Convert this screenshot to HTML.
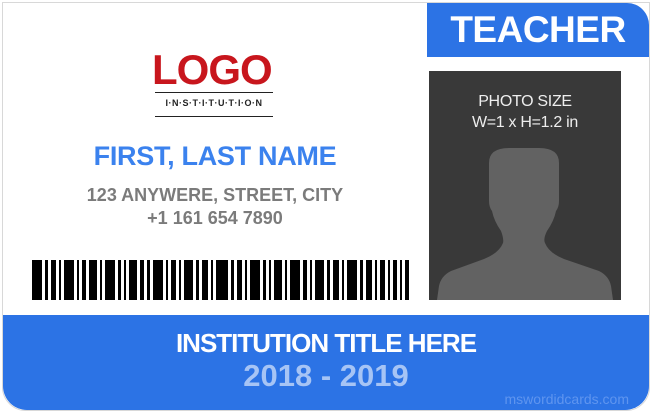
<!DOCTYPE html>
<html><head><meta charset="utf-8"><style>
*{margin:0;padding:0;box-sizing:border-box}
body{width:652px;height:413px;background:#fff;font-family:"Liberation Sans",Arial,sans-serif;position:relative;overflow:hidden}
.card{position:absolute;left:2px;top:2px;width:648px;height:409px;border:1px solid #d8d8d8;border-radius:0 0 24px 24px;overflow:hidden;background:#fff}
.tab{position:absolute;left:427px;top:3px;width:222px;height:54px;background:#2c73e5;border-top-right-radius:22px;color:#fff;font-weight:bold;font-size:37px;text-align:center;line-height:54px;letter-spacing:-0.5px}
.photo{position:absolute;left:429px;top:71px;width:192px;height:229px;background:#393939;overflow:hidden}
.photo .t{position:absolute;top:20px;width:100%;text-align:center;color:#eee;font-size:16px;line-height:21px;letter-spacing:-0.3px}
.band{position:absolute;left:3px;top:315px;width:646px;height:95px;background:#2c73e5;border-radius:0 0 24px 24px;text-align:center}
.logo{position:absolute;left:152px;top:48px;color:#c8161d;font-weight:bold;font-size:42px;letter-spacing:-1px;line-height:44px}
</style></head><body>
<div class="card"></div>
<div class="tab">TEACHER</div>
<div class="logo">LOGO</div>
<div style="position:absolute;left:155px;top:92px;width:118px;border-top:1.5px solid #222"></div>
<div style="position:absolute;left:155px;top:98px;width:118px;text-align:center;font-size:9px;font-weight:bold;color:#222;letter-spacing:0.5px;white-space:nowrap">I·N·S·T·I·T·U·T·I·O·N</div>
<div style="position:absolute;left:155px;top:116px;width:118px;border-top:1.5px solid #222"></div>
<div style="position:absolute;left:60px;top:141px;width:310px;text-align:center;color:#3b82ee;font-weight:bold;font-size:27px;letter-spacing:-0.3px">FIRST, LAST NAME</div>
<div style="position:absolute;left:60px;top:184px;width:310px;text-align:center;color:#7b7b7b;font-weight:bold;font-size:18px;line-height:23px">123 ANYWERE, STREET, CITY<br>+1 161 654 7890</div>
<svg style="position:absolute;left:32px;top:260px" width="378" height="40">
<g fill="#000">
<rect x="0" y="0" width="10" height="40"/><rect x="13" y="0" width="3" height="40"/><rect x="19" y="0" width="5" height="40"/><rect x="27" y="0" width="2" height="40"/><rect x="32" y="0" width="10" height="40"/><rect x="45" y="0" width="2" height="40"/><rect x="50" y="0" width="4" height="40"/><rect x="57" y="0" width="8" height="40"/><rect x="68" y="0" width="2" height="40"/><rect x="73" y="0" width="10" height="40"/><rect x="86" y="0" width="3" height="40"/><rect x="92" y="0" width="2" height="40"/><rect x="97" y="0" width="8" height="40"/><rect x="108" y="0" width="4" height="40"/><rect x="115" y="0" width="3" height="40"/><rect x="121" y="0" width="10" height="40"/><rect x="134" y="0" width="2" height="40"/><rect x="139" y="0" width="5" height="40"/><rect x="147" y="0" width="2" height="40"/><rect x="152" y="0" width="9" height="40"/><rect x="164" y="0" width="3" height="40"/><rect x="170" y="0" width="6" height="40"/><rect x="179" y="0" width="2" height="40"/><rect x="184" y="0" width="12" height="40"/><rect x="199" y="0" width="3" height="40"/><rect x="205" y="0" width="5" height="40"/><rect x="213" y="0" width="2" height="40"/><rect x="218" y="0" width="10" height="40"/><rect x="231" y="0" width="3" height="40"/><rect x="237" y="0" width="2" height="40"/><rect x="242" y="0" width="8" height="40"/><rect x="253" y="0" width="2" height="40"/><rect x="258" y="0" width="10" height="40"/><rect x="271" y="0" width="4" height="40"/><rect x="278" y="0" width="2" height="40"/><rect x="283" y="0" width="9" height="40"/><rect x="295" y="0" width="3" height="40"/><rect x="301" y="0" width="6" height="40"/><rect x="310" y="0" width="2" height="40"/><rect x="315" y="0" width="10" height="40"/><rect x="328" y="0" width="3" height="40"/><rect x="334" y="0" width="6" height="40"/><rect x="343" y="0" width="2" height="40"/><rect x="348" y="0" width="5" height="40"/><rect x="356" y="0" width="2" height="40"/><rect x="361" y="0" width="4" height="40"/><rect x="368" y="0" width="2" height="40"/><rect x="373" y="0" width="4" height="40"/>
</g></svg>
<div class="photo"><div class="t">PHOTO SIZE<br>W=1 x H=1.2 in</div>
<svg style="position:absolute;left:0;top:0" width="192" height="229"><path fill="#626262" d="M60 92 Q60 77 80 77 L110 77 Q130 77 130 92 L130 130 Q130 136 127 140 Q125 150 118 160 Q114 168 116 172 Q120 182 135 188 L170 200 Q180 205 182 215 L184 229 L8 229 L10 215 Q12 205 22 200 L55 188 Q70 182 74 172 Q75 168 72 160 Q65 150 63 140 Q60 136 60 130 Z"/></svg></div>
<div class="band">
<div style="color:#fff;font-weight:bold;font-size:26px;padding-top:13px;line-height:30px;letter-spacing:-1px">INSTITUTION TITLE HERE</div>
<div style="color:#a6c4f5;font-weight:bold;font-size:31px;line-height:36px">2018 - 2019</div>
<div style="position:absolute;right:20px;top:76px;color:#5f95ef;font-size:14px">mswordidcards.com</div>
</div>
</body></html>
